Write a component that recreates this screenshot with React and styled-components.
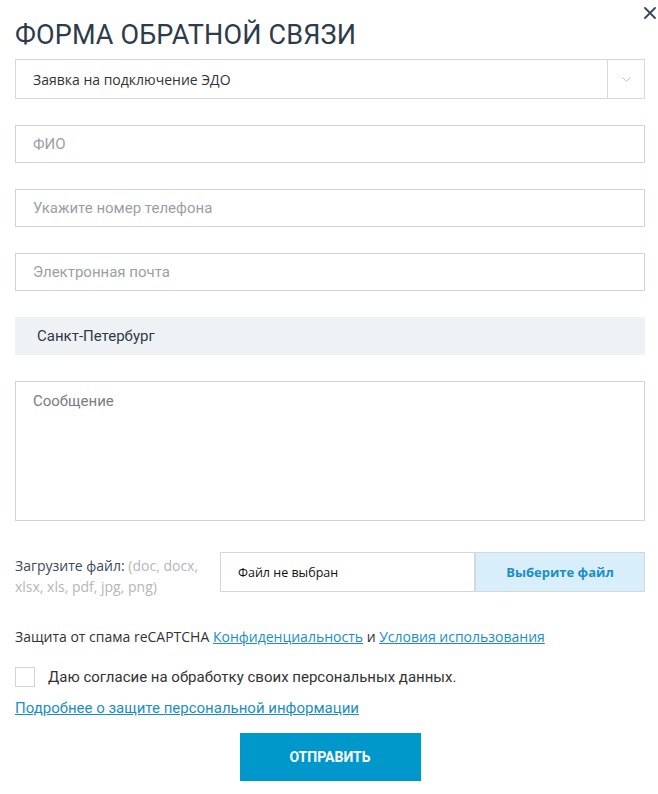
import React from 'react';
import styled, { createGlobalStyle } from 'styled-components';

const GlobalStyle = createGlobalStyle`
    html, body { margin: 0; padding: 0; background: #fff; }
    body { font-family: "Open Sans", "Noto Sans", sans-serif; }
    * { box-sizing: border-box; }
`;

const App = () => (
    <>
        <GlobalStyle />
        <Wrapper>
            <CloseBtn aria-label="close">
                <svg width="12" height="12" viewBox="0 0 12 12">
                    <path d="M1 1 L11 11 M11 1 L1 11" stroke="#34465a" strokeWidth="1.8" strokeLinecap="round" />
                </svg>
            </CloseBtn>

            <Title>ФОРМА ОБРАТНОЙ СВЯЗИ</Title>

            {/* ── тема обращения ── */}
            <Select>
                <SelectValue>Заявка на подключение ЭДО</SelectValue>
                <SelectArrow>
                    <svg width="9" height="5" viewBox="0 0 9 5">
                        <path d="M0.5 0.5 L4.5 4.5 L8.5 0.5" stroke="#c3c8cc" strokeWidth="1" fill="none" />
                    </svg>
                </SelectArrow>
            </Select>

            <Input placeholder="ФИО" />
            <Input placeholder="Укажите номер телефона" />
            <Input placeholder="Электронная почта" />

            <City>Санкт-Петербург</City>

            <Message placeholder="Сообщение" />

            {/* ── загрузка файла ── */}
            <FileRow>
                <FileLabel>
                    Загрузите файл: <Muted>(doc, docx, xlsx, xls, pdf, jpg, png)</Muted>
                </FileLabel>
                <FileBox>
                    <FileName>Файл не выбран</FileName>
                    <FileBtn>Выберите файл</FileBtn>
                </FileBox>
            </FileRow>

            <Captcha>
                Защита от спама reCAPTCHA <Link href="#">Конфиденциальность</Link> и <Link href="#">Условия использования</Link>
            </Captcha>

            <Agree>
                <Check />
                <AgreeText>Даю согласие на обработку своих персональных данных.</AgreeText>
            </Agree>

            <MoreLink href="#">Подробнее о защите персональной информации</MoreLink>

            <Submit>ОТПРАВИТЬ</Submit>
        </Wrapper>
    </>
);

export default App;

// ── Styled Components ──────────────────────────────────────────────────────────

const Wrapper = styled.div`
    position: relative;
    width: 658px; height: 794px;
    padding: 0 13px 0 15px;
    display: flex; flex-direction: column;
`;

const CloseBtn = styled.button`
    position: absolute; top: 7px; right: 2px;
    background: none; border: none; padding: 0; cursor: pointer;
    width: 12px; height: 12px; display: flex;
`;

const Title = styled.h1`
    margin: 19px 0 0;
    font-family: Roboto, "Noto Sans", sans-serif;
    font-weight: 400; font-size: 27px; line-height: 32px;
    color: #2c3c4d; letter-spacing: 0.15px;
    height: 40px;
`;

const Select = styled.div`
    display: flex; align-items: stretch;
    height: 40px;
    border: 1px solid #d5dadd;
`;

const SelectValue = styled.div`
    flex: 1;
    display: flex; align-items: center;
    padding-left: 17px;
    font-size: 14px; color: #333;
`;

const SelectArrow = styled.div`
    width: 37px;
    border-left: 1px solid #d5dadd;
    display: flex; align-items: center; justify-content: center;
`;

const fieldText = `
    font-family: Roboto, "Noto Sans", sans-serif;
    font-size: 15px; color: #333;
`;

const Input = styled.input`
    display: block; width: 100%;
    height: 38px; margin-top: 26px;
    padding: 0 17px;
    border: 1px solid #c9d5df; border-radius: 0;
    background: #fff; outline: none;
    ${fieldText}
    &::placeholder { color: #9a9fa5; }
`;

const City = styled.div`
    height: 38px; margin-top: 26px;
    padding-left: 22px;
    display: flex; align-items: center;
    background: #eef2f5;
    ${fieldText}
    color: #2e3a46;
`;

const Message = styled.textarea`
    display: block; width: 100%;
    height: 140px; margin-top: 26px;
    padding: 10px 17px; resize: none;
    border: 1px solid #c9d5df; border-radius: 0;
    outline: none;
    ${fieldText}
    &::placeholder { color: #777d83; }
`;

const FileRow = styled.div`
    display: flex; align-items: flex-start;
    margin-top: 31px;
`;

const FileLabel = styled.div`
    width: 196px; margin-right: 9px;
    padding-top: 3px;
    font-size: 14px; line-height: 21px;
    color: #3a4a5a;
`;

const Muted = styled.span`color: #b3b7bb;`;

const FileBox = styled.div`
    flex: 1;
    display: flex; height: 40px;
    border: 1px solid #d5d8da;
`;

const FileName = styled.div`
    flex: 1;
    display: flex; align-items: center;
    padding-left: 17px;
    font-size: 12.5px; color: #111;
`;

const FileBtn = styled.button`
    width: 170px;
    border: none; border-left: 2px solid #d5d8da;
    background: #d8effb; color: #1b8ec2;
    font-family: "Open Sans", sans-serif;
    font-size: 13px; font-weight: 700; cursor: pointer;
`;

const Captcha = styled.p`
    margin: 30px 0 0;
    font-size: 14px; line-height: 20px; color: #333;
`;

const Link = styled.a`
    color: #1a8ec4; text-decoration: underline;
`;

const Agree = styled.label`
    display: flex; align-items: center; gap: 13px;
    margin-top: 20px;
`;

const Check = styled.span`
    width: 20px; height: 20px; flex-shrink: 0;
    border: 1px solid #cfd4d8; background: #fff;
`;

const AgreeText = styled.span`
    font-family: Roboto, "Noto Sans", sans-serif;
    font-size: 15px; color: #333;
`;

const MoreLink = styled.a`
    margin-top: 11px; align-self: flex-start;
    font-family: Roboto, "Noto Sans", sans-serif;
    font-size: 15px; line-height: 20px;
    color: #1a8ec4; text-decoration: underline;
`;

const Submit = styled.button`
    align-self: center;
    margin-top: 15px;
    width: 181px; height: 48px;
    border: none; background: #0097cb; color: #fff;
    font-family: Roboto, sans-serif;
    font-size: 14px; font-weight: 700; cursor: pointer;
`;
